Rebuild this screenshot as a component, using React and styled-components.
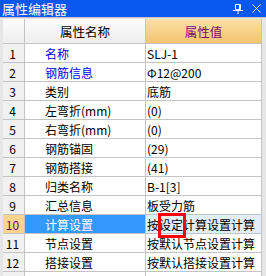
import React from "react";
import styled, { createGlobalStyle } from "styled-components";

const GlobalStyle = createGlobalStyle`
  html, body {
    margin: 0;
    padding: 0;
    overflow: hidden;
    background: #ececec;
  }
  body {
    font-family: "Noto Sans CJK SC", "Liberation Sans", sans-serif;
    font-size: 12px;
  }
`;

const ROWS = [
  { name: "名称", value: "SLJ-1", link: true },
  { name: "钢筋信息", value: "Φ12@200", link: true },
  { name: "类别", value: "底筋" },
  { name: "左弯折(mm)", value: "(0)" },
  { name: "右弯折(mm)", value: "(0)" },
  { name: "钢筋锚固", value: "(29)" },
  { name: "钢筋搭接", value: "(41)" },
  { name: "归类名称", value: "B-1[3]" },
  { name: "汇总信息", value: "板受力筋" },
  { name: "计算设置", value: "按设定计算设置计算", active: true, mark: true },
  { name: "节点设置", value: "按默认节点设置计算" },
  { name: "搭接设置", value: "按默认搭接设置计算" },
  { name: "", value: "" }
];

/**
 * @name Panel
 * @desc whole docked editor window
 */
const Panel = styled.div`
  width: 266px;
  height: 276px;
  display: flex;
  flex-direction: column;
  overflow: hidden;
  background: #e6e6e6;
`;

const TitleBar = styled.div`
  height: 17px;
  flex: none;
  display: flex;
  align-items: center;
  padding: 0 5px 0 2px;
  background: #0757f0;
  color: #fff;
  font-size: 13px;
  line-height: 17px;
`;

const Title = styled.span`
  flex: 1;
`;

const TitleTools = styled.div`
  display: flex;
  align-items: center;
  gap: 9px;
`;

const Body = styled.div`
  flex: 1;
  padding: 1px 4px 0 3px;
  border-top: 1px solid #c4c4c4;
  overflow: hidden;
`;

const Grid = styled.div`
  display: grid;
  grid-template-columns: 21px 120px 115px;
  grid-template-rows: 24px;
  grid-auto-rows: 18px;
  gap: 1px;
  background: #c3c3c3;
  border-right: 1px solid #c3c3c3;
`;

const HeadCell = styled.div`
  display: flex;
  align-items: center;
  justify-content: center;
  color: ${p => (p.accent ? "#7a0a7a" : "#000")};
  font-size: 12.5px;
  background: ${p =>
    p.accent
      ? "linear-gradient(#fbe0a6, #f3c46e)"
      : "linear-gradient(#fdfdfd, #eeeeee)"};
`;

const NumCell = styled.div`
  display: flex;
  align-items: center;
  justify-content: center;
  padding-right: 2px;
  font-size: 12px;
  color: ${p => (p.active ? "#6a0a6a" : "#000")};
  background: ${p => (p.active ? "#fbd58d" : "#f1f1f1")};
`;

const NameCell = styled.div`
  display: flex;
  align-items: center;
  padding-left: 20px;
  white-space: nowrap;
  color: ${p => (p.active ? "#fff" : p.link ? "#0000f0" : "#000")};
  background: ${p => (p.active ? "#3399ff" : "#fff")};
`;

const ValueCell = styled.div`
  position: ${p => (p.active ? "relative" : "static")};
  z-index: ${p => (p.active ? 2 : "auto")};
  display: flex;
  align-items: center;
  padding-left: 1px;
  white-space: nowrap;
  color: #000;
  background: ${p => (p.active ? "#e3eefb" : "#fff")};
`;

const Mark = styled.span`
  position: absolute;
  left: 12px;
  top: -2px;
  width: 28px;
  height: 25px;
  box-sizing: border-box;
  border: 3px solid #ff0000;
  pointer-events: none;
`;

const PinIcon = () => (
  <svg width="10" height="10" viewBox="0 0 10 10" fill="none" stroke="#fff">
    <path d="M2.5 0.5h5v5h-5z" strokeWidth="1" />
    <path d="M6.5 0.5v5" strokeWidth="1" />
    <path d="M0 6.5h10" strokeWidth="1" />
    <path d="M5 6.5v3.5" strokeWidth="1" />
  </svg>
);

const CloseIcon = () => (
  <svg width="9" height="9" viewBox="0 0 9 9" stroke="#fff" strokeWidth="1">
    <path d="M0.5 0.5l8 8M8.5 0.5l-8 8" />
  </svg>
);

export default function App() {
  return (
    <>
      <GlobalStyle />
      <Panel>
        <TitleBar>
          <Title>属性编辑器</Title>
          <TitleTools>
            <PinIcon />
            <CloseIcon />
          </TitleTools>
        </TitleBar>
        <Body>
          <Grid>
            <HeadCell />
            <HeadCell>属性名称</HeadCell>
            <HeadCell accent>属性值</HeadCell>
            {ROWS.map((r, i) => (
              <React.Fragment key={i}>
                <NumCell active={r.active}>{r.name ? i + 1 : ""}</NumCell>
                <NameCell active={r.active} link={r.link}>
                  {r.name}
                </NameCell>
                <ValueCell active={r.active}>
                  {r.value}
                  {r.mark && <Mark />}
                </ValueCell>
              </React.Fragment>
            ))}
          </Grid>
        </Body>
      </Panel>
    </>
  );
}
